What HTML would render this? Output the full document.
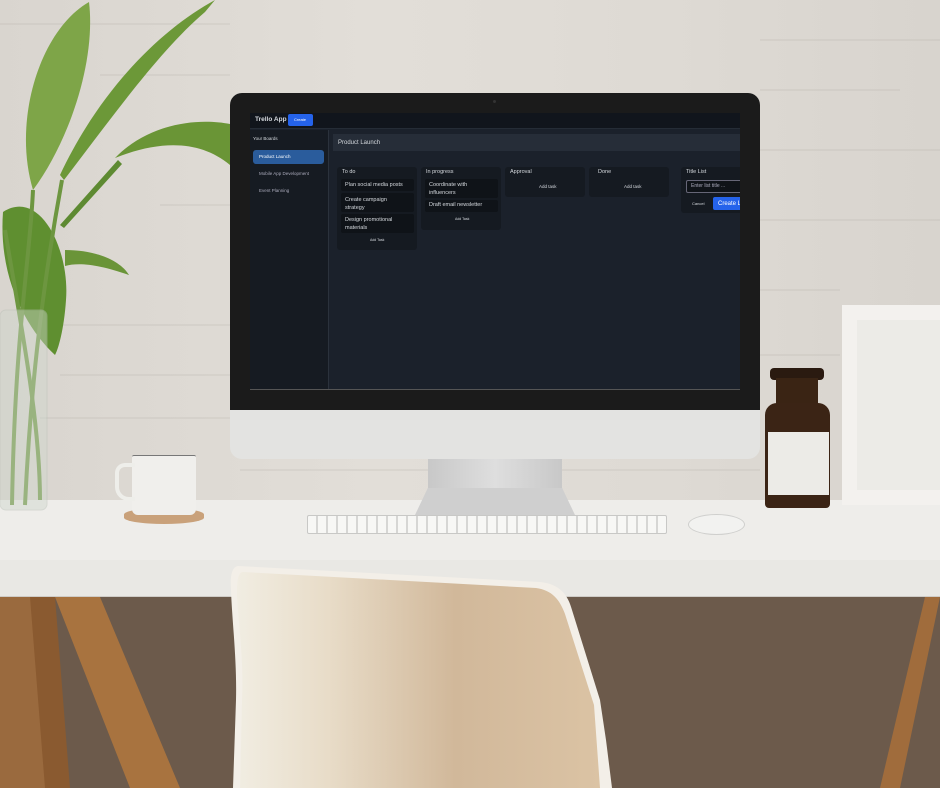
<!DOCTYPE html>
<html><head><meta charset="utf-8"><style>
*{margin:0;padding:0;box-sizing:border-box}
html{width:940px;height:788px;overflow:hidden}
body{width:940px;height:788px;overflow:hidden;position:relative;background:#dcd8d2;font-family:"Liberation Sans",sans-serif}
.a{position:absolute}
.t{position:absolute;color:#d5d9de;white-space:nowrap;line-height:1}
</style></head><body>
<!-- wall -->
<div class="a" style="left:0;top:0;width:940px;height:500px;background:linear-gradient(90deg,#d9d5cf,#e2ded8 40%,#dedad4 70%,#d8d4ce)"></div>
<svg class="a" style="left:0;top:0" width="940" height="500">
<g stroke="#a8a39c" stroke-width="1" opacity=".3">
<line x1="0" y1="24" x2="230" y2="24"/><line x1="760" y1="40" x2="940" y2="40"/>
<line x1="100" y1="75" x2="230" y2="75"/><line x1="760" y1="90" x2="900" y2="90"/>
<line x1="160" y1="205" x2="230" y2="205"/><line x1="760" y1="150" x2="940" y2="150"/>
<line x1="60" y1="325" x2="230" y2="325"/><line x1="760" y1="220" x2="940" y2="220"/>
<line x1="60" y1="375" x2="230" y2="375"/><line x1="760" y1="290" x2="840" y2="290"/>
<line x1="40" y1="418" x2="230" y2="418"/><line x1="760" y1="355" x2="840" y2="355"/>
<line x1="240" y1="470" x2="760" y2="470"/>
</g></svg>
<!-- desk -->
<div class="a" style="left:0;top:597px;width:940px;height:191px;background:#6c5a4b"></div>
<svg class="a" style="left:0;top:597px" width="940" height="191">
<path d="M0,0 L50,0 L50,191 L0,191Z" fill="#9a6a3e"/>
<path d="M55,0 L100,0 L180,191 L130,191Z" fill="#a8733f"/>
<path d="M30,0 L55,0 L70,191 L45,191Z" fill="#8a5a30"/>
<path d="M925,0 L940,0 L900,191 L880,191Z" fill="#a06c3c"/>
</svg>
<div class="a" style="left:0;top:500px;width:940px;height:60px;background:#eeedea"></div>
<div class="a" style="left:0;top:560px;width:940px;height:37px;background:#e9e8e4;border-bottom:1px solid #cfccc7"></div>
<!-- plant -->
<svg class="a" style="left:0;top:0" width="240" height="520">
<path d="M33,190 C12,120 40,30 89,2 C96,60 70,140 33,190Z" fill="#7ea548"/>
<path d="M60,175 C100,90 160,30 215,0 L205,12 C160,50 110,120 64,180Z" fill="#6c9838"/>
<path d="M60,225 L118,160 L122,164 L64,228Z" fill="#5e8a32"/>
<path d="M115,158 C150,122 200,118 230,124 L230,165 C200,140 160,140 115,158Z" fill="#6a9536"/>
<path d="M3,212 C40,188 70,250 66,300 C64,330 58,350 55,355 C28,330 -2,280 3,212Z" fill="#5f8f30"/>
<path d="M65,250 C95,250 120,260 129,275 C100,265 80,262 65,266Z" fill="#6a9438"/>
<g stroke="#6d9640" stroke-width="4" fill="none">
<path d="M33,190 C30,260 15,330 12,505"/><path d="M62,180 C40,300 30,400 25,505"/><path d="M5,230 C20,320 40,420 40,500"/>
</g>
<rect x="0" y="310" width="47" height="200" rx="6" fill="#cfd6cc" opacity=".45" stroke="#b8c0b6"/>
</svg>
<!-- cup -->
<div class="a" style="left:124px;top:508px;width:80px;height:16px;border-radius:50%/40%;background:#c9a17a"></div>
<div class="a" style="left:132px;top:455px;width:64px;height:60px;background:#f0efec;border-radius:2px 2px 6px 6px;border-top:1px solid #777"></div>
<div class="a" style="left:115px;top:463px;width:20px;height:38px;border:4px solid #eeeeea;border-right:none;border-radius:10px 0 0 14px"></div>
<!-- bottle & frame -->
<div class="a" style="left:842px;top:305px;width:98px;height:200px;background:#f3f1ee"></div>
<div class="a" style="left:857px;top:320px;width:83px;height:170px;background:#ecebe7"></div>
<div class="a" style="left:770px;top:368px;width:54px;height:12px;background:#2a1a10;border-radius:4px"></div>
<div class="a" style="left:776px;top:378px;width:42px;height:28px;background:#3a2414"></div>
<div class="a" style="left:765px;top:403px;width:65px;height:105px;background:#3b2415;border-radius:12px 12px 4px 4px"></div>
<div class="a" style="left:768px;top:432px;width:61px;height:63px;background:#ecebe7"></div>
<!-- stand -->
<div class="a" style="left:428px;top:458px;width:134px;height:30px;background:linear-gradient(90deg,#c8c8c8,#dedede,#c8c8c8)"></div>
<div class="a" style="left:415px;top:488px;width:160px;height:27px;background:#cfcfcf;clip-path:polygon(8% 0,92% 0,100% 100%,0 100%)"></div>
<!-- keyboard & mouse -->
<div class="a" style="left:307px;top:515px;width:360px;height:19px;border:1px solid #c8c8c6;border-radius:2px;background:repeating-linear-gradient(90deg,#f7f7f5 0 8px,#d6d6d4 8px 10px)"></div>
<div class="a" style="left:688px;top:514px;width:57px;height:21px;background:#f2f2f0;border-radius:50%;border:1px solid #cfcfcd"></div>
<!-- chair -->
<svg class="a" style="left:0;top:0" width="940" height="788">
<defs><linearGradient id="cg" x1="0" x2="1" y1="0" y2="0">
<stop offset="0" stop-color="#f1ede2"/><stop offset=".25" stop-color="#e8dcc8"/><stop offset=".6" stop-color="#d1b89a"/><stop offset="1" stop-color="#dbc3a4"/></linearGradient></defs>
<path d="M238,566 L540,582 C560,584 568,595 572,610 L600,700 L606,740 L612,788 L233,788 L236,700 C237,660 232,620 231,590 C230,575 232,567 238,566Z" fill="#f3efe8"/>
<path d="M243,572 L536,588 C552,590 560,600 565,614 L594,705 L600,788 L240,788 L242,700 C244,660 238,620 237,595 C237,580 238,572 243,572Z" fill="url(#cg)"/>
</svg>
<!-- monitor -->
<div class="a" style="left:230px;top:93px;width:530px;height:366px;background:#e3e3e1;border-radius:12px"></div>
<div class="a" style="left:230px;top:93px;width:530px;height:317px;background:#1b1b1b;border-radius:12px 12px 0 0"></div>
<div class="a" style="left:250px;top:113px;width:490px;height:277px;background:#1b212b;overflow:hidden;font-size:5px">
 <div class="a" style="left:0;top:0;width:490px;height:16px;background:#11151c;border-bottom:1px solid #252c36"></div>
 <div class="t" style="left:5px;top:4px;font-size:6.5px;font-weight:bold">Trello App</div>
 <div class="a" style="left:38px;top:1px;width:25px;height:12px;background:#2563eb;border-radius:2px"></div>
 <div class="t" style="left:44px;top:5px;font-size:4px;color:#fff">Create</div>
 <div class="a" style="left:0;top:17px;width:79px;height:260px;background:#161b22;border-right:1px solid #2b323c"></div>
 <div class="t" style="left:3px;top:24px;font-size:4.5px">Your Boards</div>
 <div class="a" style="left:3px;top:37px;width:71px;height:14px;background:#2a5c9c;border-radius:3px"></div>
 <div class="t" style="left:9px;top:42px;font-size:4.5px;color:#fff">Product Launch</div>
 <div class="t" style="left:9px;top:59px;font-size:4.5px;color:#aab">Mobile App Development</div>
 <div class="t" style="left:9px;top:76px;font-size:4.5px;color:#aab">Event Planning</div>
 <div class="a" style="left:83px;top:21px;width:407px;height:17px;background:#262d38"></div>
 <div class="t" style="left:88px;top:27px;font-size:6px">Product Launch</div>

 <div class="a" style="left:87px;top:54px;width:80px;height:83px;background:#151a21;border-radius:3px"></div>
 <div class="t" style="left:92px;top:57px;font-size:5.5px">To do</div>
 <div class="a" style="left:91px;top:66px;width:73px;height:12px;background:#0f1318;border-radius:2px"></div>
 <div class="t" style="left:95px;top:70px;font-size:5.5px">Plan social media posts</div>
 <div class="a" style="left:91px;top:80px;width:73px;height:19px;background:#0f1318;border-radius:2px"></div>
 <div class="t" style="left:95px;top:84px;font-size:5.5px;line-height:7.5px">Create campaign<br>strategy</div>
 <div class="a" style="left:91px;top:101px;width:73px;height:19px;background:#0f1318;border-radius:2px"></div>
 <div class="t" style="left:95px;top:104px;font-size:5.5px;line-height:7.5px">Design promotional<br>materials</div>
 <div class="t" style="left:120px;top:126px;font-size:3.5px">Add Task</div>

 <div class="a" style="left:171px;top:54px;width:80px;height:63px;background:#151a21;border-radius:3px"></div>
 <div class="t" style="left:176px;top:57px;font-size:5.5px">In progress</div>
 <div class="a" style="left:175px;top:66px;width:73px;height:19px;background:#0f1318;border-radius:2px"></div>
 <div class="t" style="left:179px;top:69px;font-size:5.5px;line-height:7.5px">Coordinate with<br>influencers</div>
 <div class="a" style="left:175px;top:87px;width:73px;height:12px;background:#0f1318;border-radius:2px"></div>
 <div class="t" style="left:179px;top:90px;font-size:5.5px">Draft email newsletter</div>
 <div class="t" style="left:205px;top:105px;font-size:3.5px">Add Task</div>

 <div class="a" style="left:255px;top:54px;width:80px;height:30px;background:#151a21;border-radius:3px"></div>
 <div class="t" style="left:260px;top:57px;font-size:5.5px">Approval</div>
 <div class="t" style="left:289px;top:72px;font-size:4.5px">Add task</div>
 <div class="a" style="left:339px;top:54px;width:80px;height:30px;background:#151a21;border-radius:3px"></div>
 <div class="t" style="left:348px;top:57px;font-size:5.5px">Done</div>
 <div class="t" style="left:374px;top:72px;font-size:4.5px">Add task</div>

 <div class="a" style="left:431px;top:54px;width:70px;height:46px;background:#151a21;border-radius:3px"></div>
 <div class="t" style="left:436px;top:57px;font-size:5.5px">Title List</div>
 <div class="a" style="left:436px;top:67px;width:60px;height:13px;background:#0f1318;border:1px solid #667;border-radius:2px"></div>
 <div class="t" style="left:441px;top:71px;font-size:5px;color:#aab">Enter list title ...</div>
 <div class="t" style="left:442px;top:89px;font-size:4px">Cancel</div>
 <div class="a" style="left:463px;top:84px;width:40px;height:13px;background:#2563eb;border-radius:2px"></div>
 <div class="t" style="left:468px;top:88px;font-size:6px;color:#fff">Create L</div>
 <div class="a" style="left:0;top:276px;width:490px;height:1px;background:#555"></div>
</div>
<div class="a" style="left:493px;top:100px;width:3px;height:3px;border-radius:50%;background:#333"></div>
</body></html>
